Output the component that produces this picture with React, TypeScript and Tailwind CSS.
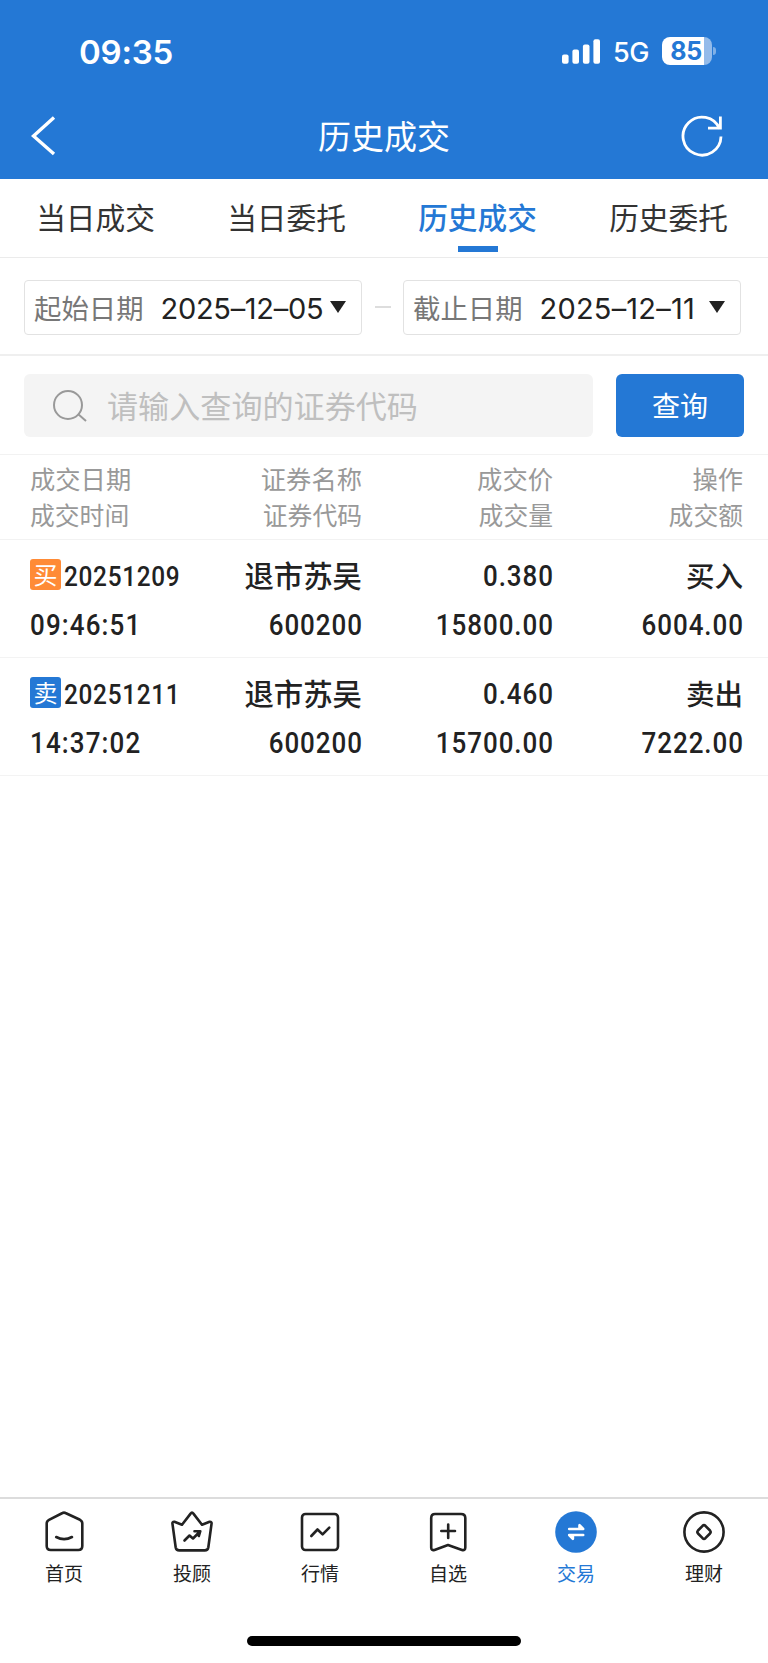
import type { ReactNode } from 'react'

type Side = 'buy' | 'sell'

interface Deal {
  side: Side
  date: string
  time: string
  name: string
  code: string
  price: string
  volume: string
  amount: string
}

const DEALS: Deal[] = [
  { side: 'buy', date: '20251209', time: '09:46:51', name: '退市苏吴', code: '600200', price: '0.380', volume: '15800.00', amount: '6004.00' },
  { side: 'sell', date: '20251211', time: '14:37:02', name: '退市苏吴', code: '600200', price: '0.460', volume: '15700.00', amount: '7222.00' },
]

const TABS = ['当日成交', '当日委托', '历史成交', '历史委托']

function StatusBar() {
  return (
    <div className="flex h-[94px] items-end justify-between pl-[79px] pr-[52px] pb-[25px]">
      <span className="font-['Inter',sans-serif] text-[33px] leading-[34px] font-semibold tracking-[-0.2px]">09:35</span>
      <div className="flex h-[34px] items-center">
        <svg className="-mt-[2px]" width="39" height="25" viewBox="0 0 39 25" fill="currentColor">
          <rect x="0" y="15.5" width="6.6" height="9.2" rx="2" />
          <rect x="10.4" y="10.6" width="6.6" height="14.1" rx="2" />
          <rect x="20.9" y="5.4" width="6.6" height="19.3" rx="2" />
          <rect x="31.4" y="0.3" width="6.6" height="24.4" rx="2" />
        </svg>
        <span className="mt-[1px] ml-[12px] w-[37px] font-['Inter',sans-serif] text-[27px] leading-[34px] font-medium tracking-[-0.4px]">5G</span>
        <div className="-mt-[2px] ml-[12px] flex h-[28px] w-[50px] items-center justify-center overflow-hidden rounded-[8px] bg-[linear-gradient(to_right,#fff_84%,#93bbea_84%)]">
          <span className="pr-[2px] font-['Inter',sans-serif] text-[25px] leading-[28px] font-bold tracking-[-0.4px] text-[#2478d5]">85</span>
        </div>
        <div className="-mt-[2px] ml-[1px] h-[8px] w-[3px] rounded-r-full bg-[#7fb0e7]" />
      </div>
    </div>
  )
}

function NavBar() {
  return (
    <div className="flex h-[85px] items-center justify-between pl-[31px] pr-[45px] pb-[1px]">
      <svg width="25" height="40" viewBox="0 0 25 40" fill="none" stroke="currentColor" strokeWidth="3.4">
        <path d="M23 1.5L2.5 20L23 38" />
      </svg>
      <h1 className="-mt-[2px] ml-[31px] text-[33px] leading-[40px] font-normal">历史成交</h1>
      <svg width="42" height="42" viewBox="0 0 42 42" fill="none" stroke="currentColor" strokeWidth="2.8">
        <path d="M40 21.5A19 19 0 1 1 38.5 13.7" />
        <path d="M39.4 1.5V13.2H27" />
      </svg>
    </div>
  )
}

function DateField({ label, value, valueClass }: { label: string; value: string; valueClass: string }) {
  return (
    <div className="flex h-[55px] w-[338px] items-center rounded-[4px] border border-[#e2e2e2] pl-[9px] pr-[15px]">
      <span className="text-[27.4px] leading-[40px] text-[#777]">{label}</span>
      <span className={`ml-[17px] mt-[4px] font-['Inter',sans-serif] text-[29px] leading-[40px] whitespace-nowrap text-[#222] ${valueClass}`}>{value}</span>
      <svg className="ml-auto -mt-px shrink-0" width="16" height="12" viewBox="0 0 16 12" fill="#222">
        <path d="M0 0H16L8 12Z" />
      </svg>
    </div>
  )
}

function HeadCell({ top, bottom, className = '' }: { top: string; bottom: string; className?: string }) {
  return (
    <div className={`flex flex-col text-[#999] ${className}`}>
      <span className="text-[25.3px] leading-[36px]">{top}</span>
      <span className="text-[24.8px] leading-[36px]">{bottom}</span>
    </div>
  )
}

// Narrow digits, close to a DIN face
function Num({ children, className }: { children: string; className: string }) {
  return (
    <span className={`block scale-x-[0.88] font-['Roboto',sans-serif] leading-[49px] font-medium ${className}`}>{children}</span>
  )
}

const LEFT_NUM = 'origin-left text-[29.5px] tracking-[1.3px]'
const RIGHT_NUM = 'origin-right -mr-[1px] text-[29.5px] tracking-[1.1px]'

function DealRow({ deal }: { deal: Deal }) {
  const buy = deal.side === 'buy'
  return (
    <div className="grid h-[118px] grid-cols-[168px_164px_191px_190px] border-b border-[#f3f3f3] pl-[30px] pt-[12px] text-[#222]">
      <div className="flex flex-col">
        <div className="flex h-[49px] items-center pb-px">
          <span className={`-mt-[3px] flex size-[31px] shrink-0 items-center justify-center rounded-[3px] pb-[2px] text-[24px] leading-[29px] text-white ${buy ? 'bg-[#ff8b36]' : 'bg-[#2478d5]'}`}>
            {buy ? '买' : '卖'}
          </span>
          <Num className="ml-[3px] origin-left text-[27.7px] tracking-[0.8px]">{deal.date}</Num>
        </div>
        <Num className={LEFT_NUM}>{deal.time}</Num>
      </div>
      <div className="flex flex-col text-right">
        <span className="mb-[4px] text-[29.4px] leading-[45px] font-medium">{deal.name}</span>
        <Num className={RIGHT_NUM}>{deal.code}</Num>
      </div>
      <div className="flex flex-col text-right">
        <Num className={RIGHT_NUM}>{deal.price}</Num>
        <Num className={RIGHT_NUM}>{deal.volume}</Num>
      </div>
      <div className="flex flex-col text-right">
        <span className="mb-[4px] text-[28.5px] leading-[45px] font-medium">{buy ? '买入' : '卖出'}</span>
        <Num className={RIGHT_NUM}>{deal.amount}</Num>
      </div>
    </div>
  )
}

function TabIcon({ children }: { children: ReactNode }) {
  return (
    <svg width="44" height="44" viewBox="0 0 44 44" fill="none" stroke="currentColor" strokeWidth="2.6" strokeLinecap="round" strokeLinejoin="round">
      {children}
    </svg>
  )
}

const NAV: { label: string; active?: boolean; icon: ReactNode }[] = [
  {
    label: '首页',
    icon: (
      <>
        <path d="M20.5 3Q22 2.2 23.5 3L38 9.8Q40.3 11 40.3 13.5V36Q40.3 40 36.3 40H8.7Q4.7 40 4.7 36V13.5Q4.7 11 7 9.8Z" />
        <path d="M14.2 27Q22 31.2 30 27" />
      </>
    ),
  },
  {
    label: '投顾',
    icon: (
      <>
        <path d="M20.6 3.6Q22 1.4 23.4 3.6L32 14.8L39.6 11.8Q42 11.6 41.5 14L38.3 37.5Q37.8 40.4 34.8 40.4H9.2Q6.2 40.4 5.7 37.5L2.5 14Q2 11.6 4.4 11.8L12 14.8Z" />
        <path d="M14.5 30.5L19.5 25.5L23 28.5L29.5 22M24.5 21.2H30.3L28.8 26" />
      </>
    ),
  },
  {
    label: '行情',
    icon: (
      <>
        <rect x="4" y="4" width="36" height="36" rx="3.5" />
        <path d="M13.3 26L19.5 19.5L24.6 24.4L31.3 17.6" />
      </>
    ),
  },
  {
    label: '自选',
    icon: (
      <>
        <path d="M9 4H35Q39.3 4 39.3 8V37.5Q39.3 40.8 36 40L22 35L8.5 40Q5.2 40.8 5.2 37.5V8Q5.2 4 9 4Z" />
        <path d="M22.2 14.5V28M15.3 21H29" />
      </>
    ),
  },
  {
    label: '交易',
    active: true,
    icon: (
      <>
        <circle cx="22" cy="22" r="20.8" fill="#2478d5" stroke="none" />
        <path d="M15.2 19H29.2L25.5 15.2V19M29.2 25H15.2L18.9 28.8V25" stroke="#fff" />
      </>
    ),
  },
  {
    label: '理财',
    icon: (
      <>
        <circle cx="22" cy="22" r="19.6" />
        <path d="M20.6 15.8Q22 14.5 23.4 15.8L28 20.5Q29.3 22 28 23.5L23.4 28.2Q22 29.5 20.6 28.2L16 23.5Q14.7 22 16 20.5Z" />
      </>
    ),
  },
]

export default function App() {
  return (
    <div className="flex h-[1663px] w-[768px] flex-col overflow-hidden bg-white font-['Noto_Sans_CJK_SC',sans-serif]">
      <header className="h-[179px] shrink-0 bg-[#2478d5] text-white">
        <StatusBar />
        <NavBar />
      </header>

      {/* Tabs */}
      <nav className="grid h-[79px] shrink-0 grid-cols-[191px_191px_191px_191px] border-b border-[#ebebeb]">
        {TABS.map(t => {
          const active = t === '历史成交'
          return (
            <button key={t} className={`flex flex-col items-center pt-[18px] text-[29.7px] leading-[40px] ${active ? 'font-medium text-[#2478d5]' : 'text-[#333]'}`}>
              {t}
              {active && <span className="mt-[9px] h-[6px] w-[40px] bg-[#2478d5]" />}
            </button>
          )
        })}
      </nav>

      {/* Date range */}
      <div className="flex h-[98px] shrink-0 items-center border-b-2 border-[#efefef] pl-[24px] pt-[2px]">
        <DateField label="起始日期" value="2025–12–05" valueClass="tracking-[-0.3px]" />
        <span className="mx-[12.5px] h-[2px] w-[16px] bg-[#ddd]" />
        <DateField label="截止日期" value="2025–12–11" valueClass="tracking-[0.2px]" />
      </div>

      {/* Search */}
      <div className="flex h-[99px] shrink-0 items-center border-b border-[#f2f2f2] pl-[24px] pt-[1px]">
        <div className="flex h-[63px] w-[569px] items-center rounded-[6px] bg-[#f4f4f4] pl-[29px]">
          <svg width="34" height="34" viewBox="0 0 34 34" fill="none" stroke="#999" strokeWidth="2">
            <circle cx="15" cy="16" r="14" />
            <path d="M25 25L33 32" />
          </svg>
          <span className="-mt-[1px] ml-[20px] text-[31.1px] leading-[44px] text-[#bfbfbf]">请输入查询的证券代码</span>
        </div>
        <button className="ml-[23px] h-[63px] w-[128px] rounded-[6px] bg-[#2478d5] text-[28px] leading-[63px] text-white">查询</button>
      </div>

      {/* Table */}
      <div className="grid h-[85px] shrink-0 grid-cols-[168px_164px_191px_190px] border-b border-[#f2f2f2] pl-[30px] pt-[5px]">
        <HeadCell top="成交日期" bottom="成交时间" />
        <HeadCell top="证券名称" bottom="证券代码" className="text-right" />
        <HeadCell top="成交价" bottom="成交量" className="text-right" />
        <HeadCell top="操作" bottom="成交额" className="text-right" />
      </div>
      {DEALS.map(d => <DealRow key={d.date} deal={d} />)}

      {/* Bottom bar */}
      <footer className="mt-auto h-[166px] shrink-0 border-t-2 border-[#dcdcdc]">
        <div className="grid grid-cols-6 pt-[11px]">
          {NAV.map(n => (
            <div key={n.label} className={`flex flex-col items-center ${n.active ? 'text-[#2478d5]' : 'text-[#222]'}`}>
              <TabIcon>{n.icon}</TabIcon>
              <span className="mt-[5px] text-[19px] leading-[28px]">{n.label}</span>
            </div>
          ))}
        </div>
        <div className="mx-auto mt-[49px] h-[10px] w-[274px] rounded-full bg-black" />
      </footer>
    </div>
  )
}
